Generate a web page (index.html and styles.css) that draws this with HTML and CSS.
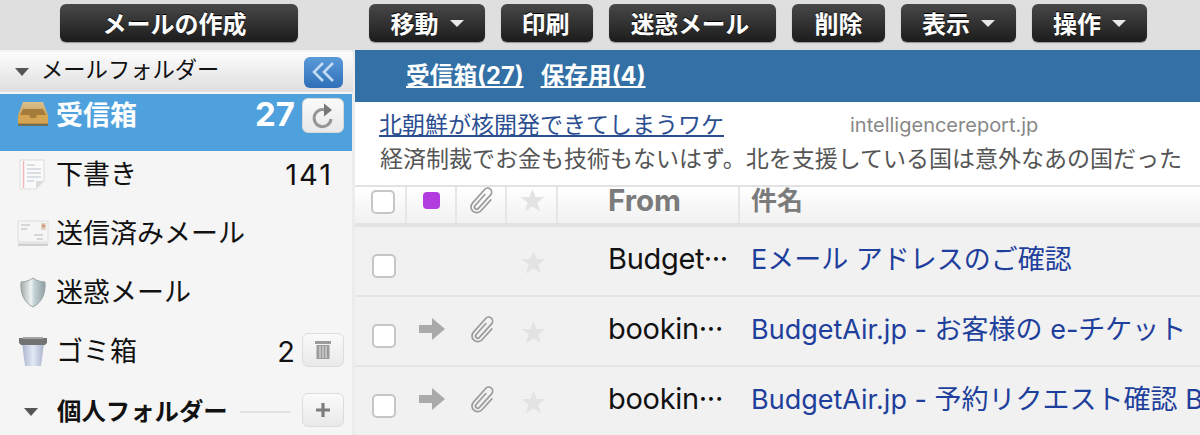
FILE: index.html
```html
<!DOCTYPE html>
<html lang="ja">
<head>
<meta charset="utf-8">
<title>メール</title>
<link rel="stylesheet" href="styles.css">
</head>
<body>
<svg class="defs" width="0" height="0" aria-hidden="true">
  <defs>
    <symbol id="clip" viewBox="-6 -4 36 36">
      <path transform="rotate(42 12 14)" d="M9.500 8v16.500a2.500 2.500 0 0 0 5 0V4a4.500 4.500 0 0 0-9 0v20.500a6.500 6.500 0 0 0 13 0V8" fill="none" stroke="#9b9b9b" stroke-width="1.900" stroke-linecap="round"/>
    </symbol>
    <symbol id="star" viewBox="0 0 24 24">
      <path d="M12 1 15 8.700h8.500L16.700 14l2.500 8.500L12 17.500l-7.200 5L7.300 14 .5 8.700H9z" fill="#e3e3e3"/>
    </symbol>
    <symbol id="arrow" viewBox="0 0 28 24">
      <path d="M1 8h13V1l13 11-13 11v-7H1z" fill="#aaa"/>
    </symbol>
  </defs>
</svg>

<div class="toolbar">
  <button class="btn compose">メールの作成</button>
  <div class="actions">
    <button class="btn w116">移動<i class="caret"></i></button>
    <button class="btn w92">印刷</button>
    <button class="btn w167">迷惑メール</button>
    <button class="btn w93">削除</button>
    <button class="btn w115">表示<i class="caret"></i></button>
    <button class="btn w115">操作<i class="caret"></i></button>
  </div>
</div>

<div class="body">
  <aside class="side">
    <div class="side-head">
      <i class="tri"></i><span class="side-title">メールフォルダー</span>
      <span class="collapse">
        <svg width="28" height="22" viewBox="0 0 28 22"><path d="M13 2 4 11l9 9M23 2l-9 9 9 9" fill="none" stroke="#c2dcf3" stroke-width="2.600"/></svg>
      </span>
    </div>

    <div class="folder active">
      <svg class="ficon" width="32" height="32" viewBox="0 0 32 32">
        <defs><linearGradient id="tray" x1="0" y1="0" x2="0" y2="1"><stop offset="0" stop-color="#dcc08a"/><stop offset="1" stop-color="#b8914f"/></linearGradient></defs>
        <path d="M6 4h20l5 13v9H1v-9z" fill="url(#tray)"/>
        <path d="M6 11h20l3 6H20l-1.500 3h-5L12 17H3z" fill="#a67c3a"/>
        <path d="M1 17h10.500l1.500 3.500h6l1.500-3.500H31v9H1z" fill="#d6a552"/>
        <path d="M1 25.500h30V28H1z" fill="#7c5c2c" opacity=".75"/>
      </svg>
      <span class="fname strong">受信箱</span>
      <span class="count strong big">27</span>
      <span class="mini tall">
        <svg width="26" height="30" viewBox="0 0 26 30"><path d="M15 9a8.500 8.500 0 1 0 6 9" fill="none" stroke="#959595" stroke-width="3"/><path d="M14 2.500 22 9l-8 6.500z" fill="#777"/></svg>
      </span>
    </div>

    <div class="folder">
      <svg class="ficon" width="32" height="32" viewBox="0 0 32 32">
        <path d="M3 1h24v21l-8 8H3z" fill="#fafafa" stroke="#dcdcdc"/>
        <path d="M6.500 2v27" stroke="#f0b8b8" stroke-width="1.500"/>
        <path d="M10 6h8M10 10h14M10 14h14M10 18h14M10 22h7" stroke="#cfd6e0" stroke-width="1.500"/>
        <path d="M27 22h-8v8z" fill="#dcdcdc"/>
      </svg>
      <span class="fname">下書き</span>
      <span class="count plain">141</span>
    </div>

    <div class="folder">
      <svg class="ficon" width="32" height="32" viewBox="0 0 32 32">
        <path d="M1 3h30v21H1z" fill="#f5f5f5" stroke="#dcdcdc"/>
        <path d="M4 7h9M4 11h6M17 17h9M20 21h6" stroke="#cccccc" stroke-width="1.500"/>
        <path d="M24 5h5v7h-5z" fill="#dfd5c4"/>
        <circle cx="26.500" cy="8" r="1.800" fill="#d9987f"/>
        <path d="M1 25.500h30v2.500H1z" fill="#cfcfcf"/>
      </svg>
      <span class="fname">送信済みメール</span>
    </div>

    <div class="folder">
      <svg class="ficon" width="32" height="32" viewBox="0 0 32 32">
        <defs><linearGradient id="shield" x1="0" y1="0" x2="1" y2="0"><stop offset="0" stop-color="#a6aaa9"/><stop offset=".42" stop-color="#eef3f3"/><stop offset=".55" stop-color="#c3d2d6"/><stop offset="1" stop-color="#8f9fa3"/></linearGradient></defs>
        <path d="M16 1c3 2.500 8 4 12 4 .8 11-2.500 20-12 25C6.500 25 3.200 16 4 5c4 0 9-1.500 12-4z" fill="url(#shield)" stroke="#9aa0a0"/>
      </svg>
      <span class="fname">迷惑メール</span>
    </div>

    <div class="folder">
      <svg class="ficon" width="32" height="32" viewBox="0 0 32 32">
        <defs><linearGradient id="bin" x1="0" y1="0" x2="1" y2="0"><stop offset="0" stop-color="#a9b3cc"/><stop offset=".5" stop-color="#e2e8f4"/><stop offset="1" stop-color="#a9b3cc"/></linearGradient></defs>
        <path d="M5 7h22l-3 23H8z" fill="url(#bin)"/>
        <path d="M2 2h28v5l-2 2H4L2 7z" fill="#737373"/>
        <path d="M6 1h20v2H6z" fill="#a5a5a5"/>
      </svg>
      <span class="fname">ゴミ箱</span>
      <span class="count">2</span>
      <span class="mini">
        <svg width="18" height="20" viewBox="0 0 18 20"><path d="M1 1h16v3H1z" fill="#9b9b9b"/><path d="M2.500 5h13v14h-13z" fill="#9b9b9b"/><path d="M6 6v12M9 6v12M12 6v12" stroke="#e6e6e6"/></svg>
      </span>
    </div>

    <div class="personal">
      <i class="tri"></i>
      <span class="personal-title">個人フォルダー</span>
      <span class="rule"></span>
      <span class="mini">
        <svg width="16" height="16" viewBox="0 0 16 16"><path d="M8 1v14M1 8h14" stroke="#7d7d7d" stroke-width="3.200"/></svg>
      </span>
    </div>
  </aside>

  <main class="main">
    <nav class="tabs">
      <a class="tab" href="#">受信箱(27)</a>
      <a class="tab" href="#">保存用(4)</a>
    </nav>
    <section class="ad">
      <div class="ad-top"><a class="ad-link" href="#">北朝鮮が核開発できてしまうワケ</a><span class="ad-domain">intelligencereport.jp</span></div>
      <p class="ad-text">経済制裁でお金も技術もないはず。北を支援している国は意外なあの国だった</p>
    </section>

    <div class="grid head">
      <div class="cell"><i class="check"></i></div>
      <div class="cell"><i class="flag"></i></div>
      <div class="cell"><svg class="clip"><use href="#clip"/></svg></div>
      <div class="cell"><svg class="star"><use href="#star"/></svg></div>
      <div class="cell from">From</div>
      <div class="cell subject">件名</div>
    </div>

    <div class="grid row">
      <div class="cell"><i class="check"></i></div>
      <div class="cell"></div>
      <div class="cell"></div>
      <div class="cell"><svg class="star"><use href="#star"/></svg></div>
      <div class="cell from">Budget···</div>
      <div class="cell subject"><a href="#">Eメール アドレスのご確認</a></div>
    </div>
    <div class="grid row">
      <div class="cell"><i class="check"></i></div>
      <div class="cell"><svg class="arrow"><use href="#arrow"/></svg></div>
      <div class="cell"><svg class="clip"><use href="#clip"/></svg></div>
      <div class="cell"><svg class="star"><use href="#star"/></svg></div>
      <div class="cell from">bookin···</div>
      <div class="cell subject"><a href="#">BudgetAir.jp - お客様の e-チケット</a></div>
    </div>
    <div class="grid row">
      <div class="cell"><i class="check"></i></div>
      <div class="cell"><svg class="arrow"><use href="#arrow"/></svg></div>
      <div class="cell"><svg class="clip"><use href="#clip"/></svg></div>
      <div class="cell"><svg class="star"><use href="#star"/></svg></div>
      <div class="cell from">bookin···</div>
      <div class="cell subject"><a href="#">BudgetAir.jp - 予約リクエスト確認 B</a></div>
    </div>
  </main>
</div>
</body>
</html>
```

FILE: styles.css
```css
* { box-sizing: border-box; }
html, body { margin: 0; height: 435px; overflow: hidden; }
body {
  width: 1200px;
  background: #f5f5f5;
  font-family: Inter, "Noto Sans CJK JP", sans-serif;
  color: #111;
}
.defs { display: block; height: 0; }
a { color: inherit; }
svg { filter: blur(.35px); }
.defs { filter: none; }

.toolbar {
  height: 50px;
  display: flex;
  align-items: flex-start;
  gap: 71px;
  padding: 4px 0 0 60px;
  background: #dfdfdf;
}
.actions { display: flex; gap: 16px; }
.btn {
  height: 38px;
  padding: 4px 0 0;
  border: 0;
  border-radius: 6px;
  background: linear-gradient(#484848, #1c1c1c);
  box-shadow: 0 1px 1px rgba(0,0,0,.35);
  color: #fff;
  font: 700 24px/30px Inter, "Noto Sans CJK JP", sans-serif;
  display: flex;
  align-items: center;
  justify-content: center;
  text-shadow: 0 -1px 0 #000;
}
.compose { width: 238px; padding-right: 9px; }
.w116 { width: 116px; }
.w115 { width: 115px; }
.w92 { width: 92px; padding-right: 3px; }
.w93 { width: 93px; }
.w167 { width: 167px; padding-right: 5px; font-size: 23.700px; }
.caret {
  width: 0; height: 0;
  margin: -3px 0 0 11px;
  border: 7px solid transparent;
  border-top: 7px solid #e8e8e8;
  border-bottom: 0;
}

.body { display: flex; height: 385px; }

.side {
  width: 355px;
  flex: none;
  background: #f5f5f5;
  border-right: 3px solid #ececec;
}
.side-head {
  height: 40px;
  margin-top: 2px;
  display: flex;
  align-items: center;
  padding: 0 10px 0 15px;
  background: linear-gradient(#fdfdfd, #dedede);
  margin-right: -1px;
}
.tri {
  width: 0; height: 0;
  border: 7px solid transparent;
  border-top: 8px solid #555;
  border-bottom: 0;
  flex: none;
}
.side-title { margin-left: 12px; font-size: 22.300px; line-height: 36px; height: 40px; flex: 1; }
.collapse {
  width: 39px; height: 31px;
  border-radius: 6px;
  background: linear-gradient(#5b9ad8, #2f6fb8);
  display: flex; align-items: center; justify-content: center;
}
.folder {
  height: 59px;
  display: flex;
  align-items: center;
  padding: 0 8px 0 17px;
  font-size: 27px;
}
.folder .mini { margin-bottom: 3px; }
.folder.active {
  height: 57px;
  margin-top: 2px;
  align-items: flex-start;
  padding: 4px 8px 0 17px;
  background: #4fa1de;
  color: #fff;
}
.folder.active .mini { margin-bottom: 0; }
.folder.active + .folder { margin-top: -5px; height: 58px; }
.ficon { flex: none; }
.fname { margin-left: 7px; flex: 1; line-height: 36px; }
.strong { font-weight: 700; }
.count { font-size: 29px; line-height: 36px; margin-right: 7px; }
.count.big { font-size: 33px; margin-top: -2px; }
.count.plain { margin-right: 11px; letter-spacing: 2px; }
.mini {
  width: 42px; height: 34px;
  flex: none;
  border-radius: 6px;
  border: 1px solid #dcdcdc;
  background: linear-gradient(#fafafa, #e9e9e9);
  display: flex; align-items: center; justify-content: center;
}
.mini.tall { height: 35px; border-color: #d8d8d8; }
.personal {
  height: 54px;
  margin-top: 4px;
  display: flex;
  align-items: center;
  padding: 0 8px 0 24px;
}
.personal .mini { margin-bottom: 5px; }
.personal-title { margin-left: 19px; font-size: 24.400px; font-weight: 700; line-height: 34px; margin-top: -2px; }
.rule { flex: 1; height: 2px; margin: 0 11px 0 12px; background: #e2e2e2; }

.main { flex: 1; min-width: 0; background: #f1f1f1; overflow: hidden; }
.tabs {
  height: 52px;
  display: flex;
  align-items: center;
  gap: 17px;
  padding: 0 0 0 51px;
  background: #3270a5;
}
.tab { color: #fff; font-size: 23.700px; font-weight: 700; line-height: 30px; }
.ad { height: 84px; padding: 6px 0 0 24px; background: #fff; }
.ad-top { display: flex; align-items: center; height: 34px; }
.ad-link { width: 471px; color: #2c4f92; font-size: 23px; line-height: 34px; }
.ad-domain { color: #888; font-size: 20px; line-height: 34px; margin-top: -1px; }
.ad-text { margin: -1px 0 0 1px; color: #555; font-size: 23px; line-height: 36px; white-space: nowrap; }

.grid {
  display: grid;
  grid-template-columns: 52px 50px 50px 51px 182px 1fr;
}
.cell { display: flex; align-items: center; justify-content: center; min-width: 0; white-space: nowrap; }
.head {
  height: 42px;
  margin-top: -1px;
  grid-template-rows: 36px;
  border-top: 2px solid #e2e2e2;
  border-bottom: 4px solid #e3e3e3;
  background: linear-gradient(#ffffff, #f1f1f1);
  color: #7b7b7b;
}
.head .cell { border-right: 2px solid #e6e6e6; padding-bottom: 10px; }
.head .cell:last-child { border-right: 0; }
.head .from { font-size: 29.500px; font-weight: 700; line-height: 26px; }
.head .subject { font-size: 26px; font-weight: 700; line-height: 26px; padding-bottom: 8px; overflow: visible; }
.row { height: 70px; border-bottom: 2px solid #e5e5e5; background: #f1f1f1; }
.row .cell { padding-bottom: 4px; }
.from { justify-content: flex-start; padding-left: 50px; font-size: 29px; }
.row .from { color: #111; letter-spacing: -.3px; padding-bottom: 6px; }
.subject { justify-content: flex-start; padding-left: 11px; font-size: 27px; overflow: hidden; }
.row .subject { padding-bottom: 8px; }
.subject a { color: #1f3f9c; text-decoration: none; }
.check {
  width: 24px; height: 24px;
  margin: 14px 0 0 6px;
  border: 2px solid #c6c6c6;
  border-radius: 5px;
  background: #fff;
}
.head .check { margin-top: 4px; }
.flag {
  width: 17px; height: 17px;
  border-radius: 4px;
  background: #b33ce0;
}
.clip { width: 32px; height: 32px; margin-left: 3px; }
.star { width: 25px; height: 25px; margin-left: 2px; }
.row .star { margin-top: 6px; }
.arrow { width: 28px; height: 24px; }
```
